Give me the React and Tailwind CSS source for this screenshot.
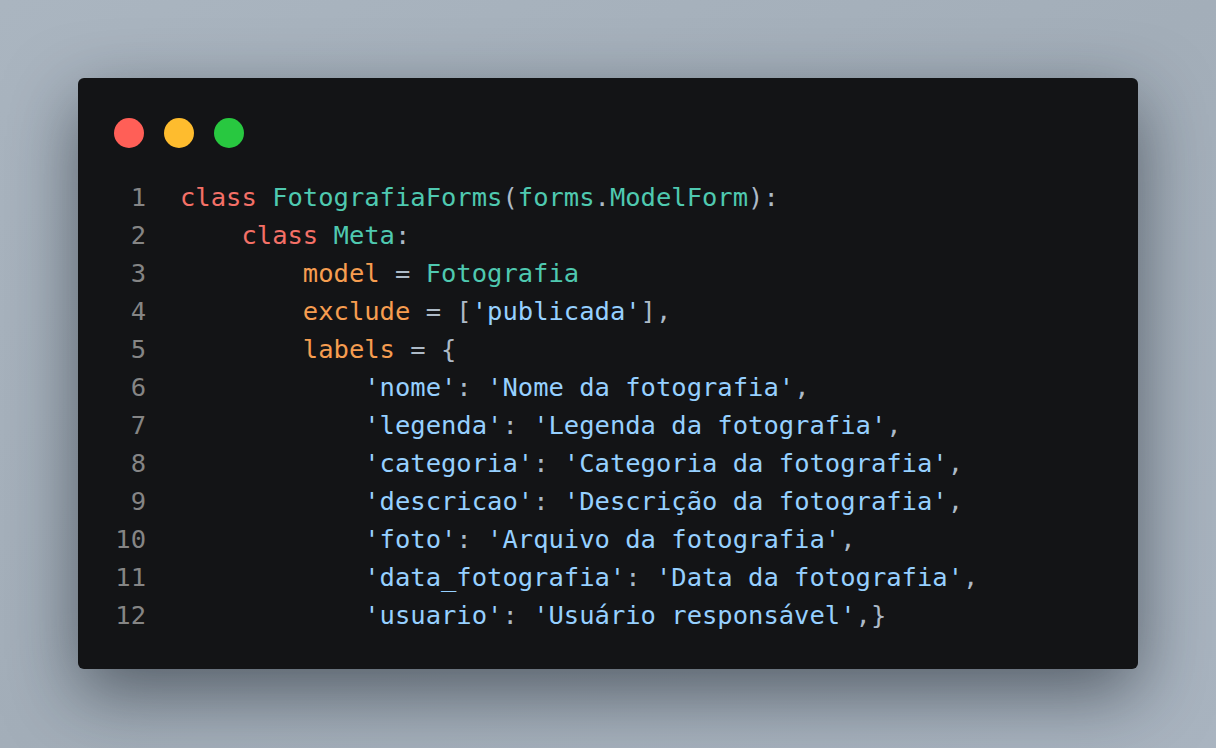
const K = "text-[#f47067]";
const T = "text-[#4fc9b0]";
const V = "text-[#f69d50]";
const S = "text-[#96d0ff]";
const P = "text-[#adbac7]";

const lines = [
  [["class ", K], ["FotografiaForms", T], ["(", P], ["forms", T], [".", P], ["ModelForm", T], ["):", P]],
  [["    "], ["class ", K], ["Meta", T], [":", P]],
  [["        "], ["model", V], [" = ", P], ["Fotografia", T]],
  [["        "], ["exclude", V], [" = [", P], ["'publicada'", S], ["],", P]],
  [["        "], ["labels", V], [" = {", P]],
  [["            "], ["'nome'", S], [": ", P], ["'Nome da fotografia'", S], [",", P]],
  [["            "], ["'legenda'", S], [": ", P], ["'Legenda da fotografia'", S], [",", P]],
  [["            "], ["'categoria'", S], [": ", P], ["'Categoria da fotografia'", S], [",", P]],
  [["            "], ["'descricao'", S], [": ", P], ["'Descrição da fotografia'", S], [",", P]],
  [["            "], ["'foto'", S], [": ", P], ["'Arquivo da fotografia'", S], [",", P]],
  [["            "], ["'data_fotografia'", S], [": ", P], ["'Data da fotografia'", S], [",", P]],
  [["            "], ["'usuario'", S], [": ", P], ["'Usuário responsável'", S], [",}", P]],
];

export default function App() {
  return (
    <div className="w-[1216px] h-[748px] bg-gradient-to-br from-[#aab5c0] via-[#a3aeb9] to-[#a9b4c0] pt-[78px] pl-[78px]">
      <div className="w-[1060px] h-[591px] bg-[#131416] rounded-[6px] shadow-[0_24px_70px_rgba(20,28,36,0.55)] pt-[40px] pl-[36px]">
        <div className="flex gap-[20px]">
          <span className="w-[30px] h-[30px] rounded-full bg-[#ff5f57]" />
          <span className="w-[30px] h-[30px] rounded-full bg-[#febc2e]" />
          <span className="w-[30px] h-[30px] rounded-full bg-[#28c840]" />
        </div>
        <div className="mt-[30px] font-['DejaVu_Sans_Mono',monospace] text-[25.5px] leading-[38px] whitespace-pre">
          {lines.map((parts, i) => (
            <div key={i} className="flex">
              <span className="w-[31px] ml-px text-right text-[#858585]">{i + 1}</span>
              <span className="ml-[34px]">
                {parts.map(([t, c], j) => (
                  <span key={j} className={c}>{t}</span>
                ))}
              </span>
            </div>
          ))}
        </div>
      </div>
    </div>
  );
}
